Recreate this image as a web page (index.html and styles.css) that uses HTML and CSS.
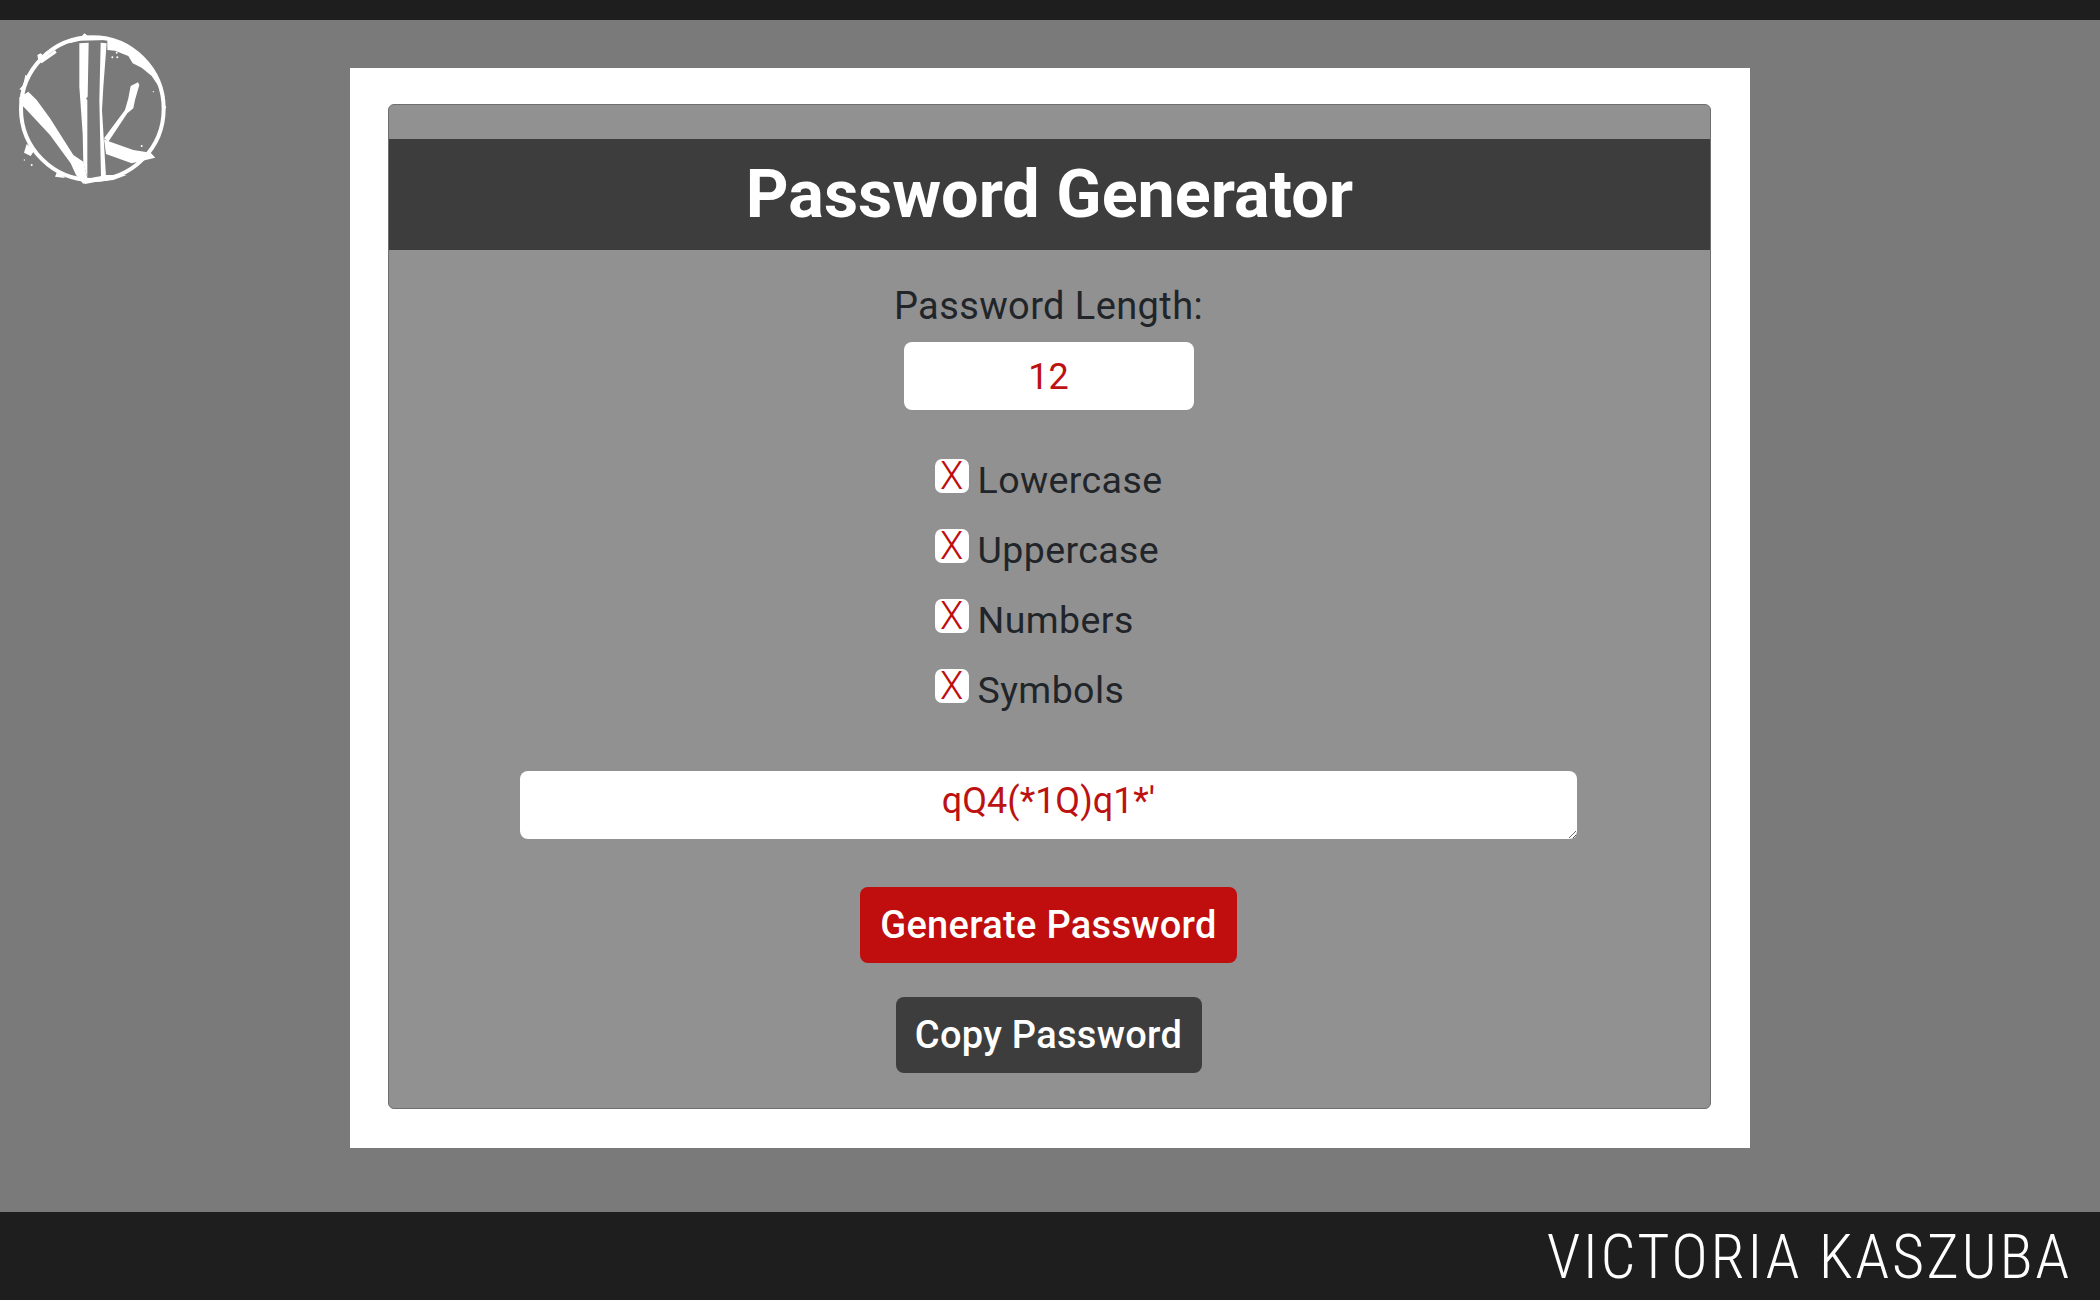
FILE: index.html
```html
<!DOCTYPE html>
<html lang="en">
<head>
<meta charset="utf-8">
<title>Password Generator</title>
<link rel="stylesheet" href="styles.css">
</head>
<body>
<div class="topbar"></div>
<svg class="logo" viewBox="0 0 600 600" width="200" height="200" aria-hidden="true">
  <circle cx="277" cy="326" r="214" fill="none" stroke="#fff" stroke-width="12"/>
  <g fill="#fff">
    <path d="M253 100 L264 108 L318 110 L322 120 L240 122 L208 130 L215 116 L243 112 Z"/>
    <path d="M112 165 L122 160 L135 172 L165 150 L170 158 L125 190 L115 182 Z"/>
    <path d="M322 118 L322 150 L345 152 L385 168 L398 190 L425 203 L455 228 L478 262 L486 300 L494 290 L470 225 L420 165 L360 126 Z"/>
    <path d="M76 225 L84 228 L80 245 L70 272 L58 268 L70 255 Z"/>
    <path d="M490 310 L499 322 L490 330 Z"/>
    <path d="M80 432 L72 458 L92 468 L104 450 Z"/>
    <path d="M170 518 L185 522 L195 534 L165 530 Z"/>
    <path d="M238 130 L266 128 L263 290 L258 296 L262 300 L262 532 L250 490 L248 400 L238 260 Z"/>
    <path d="M302 128 L320 130 L310 260 L306 330 L318 530 L303 532 L298 300 Z"/>
    <path d="M58 292 L85 275 L110 300 L150 355 L220 465 L250 485 L262 535 L250 552 L228 525 L212 490 L150 405 L78 328 L60 310 Z"/>
    <path d="M312 415 L375 330 L385 295 L392 258 L414 247 L418 255 L405 300 L400 325 L382 340 L325 425 Z"/>
    <path d="M312 418 L330 425 L400 450 L452 458 L466 473 L395 490 L318 462 Z"/>
    <path d="M320 525 L380 525 L340 540 L290 545 L255 552 L240 540 Z"/>
    <circle cx="337" cy="172" r="3"/><circle cx="352" cy="172" r="3"/><circle cx="350" cy="158" r="3"/><circle cx="95" cy="495" r="3"/><circle cx="73" cy="480" r="2"/><circle cx="460" cy="275" r="2"/><circle cx="425" cy="438" r="3"/>
  </g>
</svg>
<main class="page">
  <section class="frame">
    <div class="card">
      <h1 class="title">Password Generator</h1>
      <div class="body">
        <label class="length-label" for="len">Password Length:</label>
        <input class="length" id="len" type="text" value="12">
        <ul class="options">
          <li class="option"><span class="box">X</span><span>Lowercase</span></li>
          <li class="option"><span class="box">X</span><span>Uppercase</span></li>
          <li class="option"><span class="box">X</span><span>Numbers</span></li>
          <li class="option"><span class="box">X</span><span>Symbols</span></li>
        </ul>
        <textarea class="output">qQ4(*1Q)q1*'</textarea>
        <button class="btn btn-red">Generate Password</button>
        <button class="btn btn-dark">Copy Password</button>
      </div>
    </div>
  </section>
</main>
<footer class="footer"><span class="name">VICTORIA KASZUBA</span></footer>
</body>
</html>
```
FILE: styles.css
```css
* { box-sizing: border-box; }
html, body { margin: 0; height: 100%; }
body {
  display: flex;
  flex-direction: column;
  height: 1300px;
  background: #7a7a7a;
  font-family: Roboto, "Noto Sans", sans-serif;
  color: #212529;
  overflow: hidden;
  position: relative;
}
.topbar { height: 20px; background: #1e1e1e; }
.logo { position: absolute; left: 0; top: 0; }
.page { flex: 1; display: flex; justify-content: center; align-items: flex-start; padding-top: 48px; }
.frame { width: 1400px; height: 1080px; background: #fff; padding: 36px 39px 39px 38px; }
.card {
  height: 100%;
  background: #919191;
  border: 1.5px solid #6f6f6f;
  border-radius: 6px;
  padding-top: 34px;
  overflow: hidden;
}
.title {
  margin: 0;
  height: 111px;
  background: #3d3d3d;
  color: #fff;
  font-size: 66.5px;
  font-weight: 700;
  line-height: 110px;
  text-align: center;
}
.body { display: flex; flex-direction: column; align-items: center; padding-right: 2px; }
.length-label { margin-top: 35px; font-size: 38px; line-height: 42px; letter-spacing: .4px; }
.length {
  margin-top: 15px;
  width: 290px;
  height: 68px;
  border: 0;
  border-radius: 8px;
  background: #fff;
  color: #bd1212;
  font: 400 36px Roboto, sans-serif;
  text-align: center;
  padding-top: 3px;
}
.options { list-style: none; margin: 49px 0 0; padding: 0; display: flex; flex-direction: column; gap: 28px; }
.option { display: flex; align-items: flex-start; gap: 9px; height: 42px; font-size: 37.5px; line-height: 43px; letter-spacing: .4px; }
.box {
  width: 34px;
  height: 34px;
  background: #fff;
  border-radius: 7px;
  color: #c00d0d;
  font-size: 38px;
  font-weight: 300;
  letter-spacing: 0;
  line-height: 34px;
  text-align: center;
}
.output {
  margin-top: 60px;
  width: 1057px;
  height: 68px;
  border: 0;
  border-radius: 8px;
  background: #fff;
  color: #bd1212;
  font: 400 36px Roboto, sans-serif;
  text-align: center;
  padding: 9px 12px;
}
.btn { border: 0; border-radius: 8px; color: #fff; font: 500 38px Roboto, sans-serif; letter-spacing: .3px; height: 76px; }
.btn-red { margin-top: 48px; width: 377px; background: #c00d0d; }
.btn-dark { margin-top: 34px; width: 306px; background: #3d3d3d; }
.footer { height: 88px; background: #1e1e1e; color: #fff; display: flex; justify-content: flex-end; padding-right: 28px; }
.name { font-size: 62px; font-weight: 300; line-height: 90px; font-stretch: 75%; letter-spacing: 2.6px; white-space: nowrap; }
```
